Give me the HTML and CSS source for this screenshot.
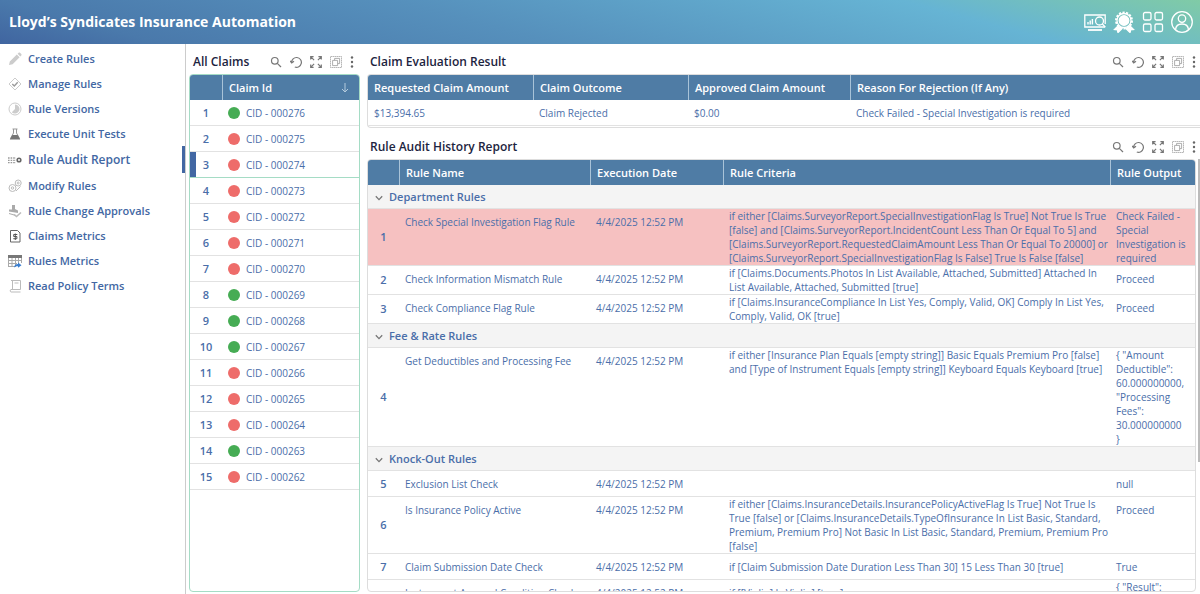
FILE: index.html
```html
<!DOCTYPE html>
<html lang="en">
<head>
  <meta charset="UTF-8" />
  <title>Lloyd's Syndicates Insurance Automation</title>
  <meta name="viewport" content="width=device-width, initial-scale=1.0">
  <link rel="stylesheet" href="styles.css">
</head>
<body>
  <!-- Shared icons -->
  <svg class="sprite" aria-hidden="true">
    <symbol id="i-search" viewBox="0 0 12 12"><circle cx="4.8" cy="4.8" r="3.3"/><path d="M7.3 7.3 11 11"/></symbol>
    <symbol id="i-reload" viewBox="0 0 12 12"><path d="M1.6 6.6A4.9 4.9 0 1 1 4.8 11M0 4.8l1.7 2.2 2.3-1.7"/></symbol>
    <symbol id="i-expand" viewBox="0 0 12 12"><path d="M.7 3.6V.7h2.9M8.4.7h2.9v2.9M11.3 8.4v2.9H8.4M3.6 11.3H.7V8.4M.7.7l3.4 3.4M11.3.7 7.9 4.1M11.3 11.3 7.9 7.9M.7 11.3l3.4-3.4"/></symbol>
    <symbol id="i-copy" viewBox="0 0 12 12"><rect x=".5" y=".5" width="11" height="11" stroke-dasharray="1.4 .6"/><path d="M4.6 4.2V2.4h5v5.2H7.8M2.6 4.4h5v5.2h-5z"/></symbol>
    <symbol id="i-more" viewBox="0 0 4 12"><circle cx="2" cy="1.5" r="1.2"/><circle cx="2" cy="6" r="1.2"/><circle cx="2" cy="10.5" r="1.2"/></symbol>
    <symbol id="i-chevron" viewBox="0 0 8 6"><path d="M.8 1.2 4 4.6l3.2-3.4"/></symbol>
  </svg>

  <header class="topbar">
    <h1>Lloyd’s Syndicates Insurance Automation</h1>
    <div class="topbar-actions">
      <button type="button" aria-label="Dashboard">
        <svg viewBox="0 0 22 22"><path d="M21.200 13V4H.8v12h20.400"/><path d="M4 13.500V11M6.200 13.500V9.500M8.400 13.500V8" stroke-width="1.400"/><circle cx="15.500" cy="10" r="4"/><path d="m18.300 13 3 3"/><path d="M4 19h14" stroke-width="1.800"/></svg>
      </button>
      <button type="button" aria-label="Awards">
        <svg viewBox="0 0 22 22"><path class="solid" d="m5 15-3.500 3.500 3 .3.500 2.700 4-4zM17 15l3.500 3.500-3 .3-.5 2.700-4-4z"/><circle cx="11" cy="9.500" r="8" stroke-dasharray="2.200 1.390" stroke-width="2"/><circle cx="11" cy="9.500" r="7"/><circle class="solid" cx="11" cy="9.500" r="4.800"/></svg>
      </button>
      <button type="button" aria-label="Apps">
        <svg viewBox="0 0 22 22"><rect x="1.500" y="1.500" width="7.500" height="7.500" rx="1.500"/><rect x="13" y="1.500" width="7.500" height="7.500" rx="1.500"/><rect x="1.500" y="13" width="7.500" height="7.500" rx="1.500"/><rect x="13" y="13" width="7.500" height="7.500" rx="1.500"/></svg>
      </button>
      <button type="button" aria-label="Profile">
        <svg viewBox="0 0 22 22"><circle cx="11" cy="11" r="10.300"/><circle cx="11" cy="7.600" r="3.700"/><path d="M4.500 18.800c.3-3.800 3-5.800 6.500-5.800s6.200 2 6.500 5.800"/></svg>
      </button>
    </div>
  </header>

  <div class="layout">
    <nav class="sidebar">
      <a href="#"><svg viewBox="0 0 14 14"><path fill="#ccc" d="m1 13 .8-3.600 7-7 2.800 2.800-7 7zM9.600 1.700l1-1c.5-.4 1-.4 1.400 0l1.300 1.300c.4.5.4 1 0 1.400l-1 1z"/></svg>Create Rules</a>
      <a href="#"><svg viewBox="0 0 14 14"><path fill="none" stroke="#ccc" d="m7 1 6 6-6 6-6-6z"/><path fill="none" stroke="#999" stroke-width="1.400" d="m4.300 7 2 2 3.400-3.700"/></svg>Manage Rules</a>
      <a href="#"><svg viewBox="0 0 14 14"><circle cx="7" cy="7" r="6" fill="none" stroke="#ccc"/><path fill="#ccc" d="M7 2.500a4.500 4.500 0 1 1-3.200 7.700L7 7z"/></svg>Rule Versions</a>
      <a href="#"><svg viewBox="0 0 14 14"><path fill="none" stroke="#999" d="M4.500 2h5M5.500 2v4l-3 5.500h9L8.500 6V2"/><path fill="#777" d="m4.300 8-2.500 4.500h10.400L9.700 8z"/></svg>Execute Unit Tests</a>
      <a href="#" class="active"><svg viewBox="0 0 14 14"><path fill="none" stroke="#999" stroke-width="1.300" stroke-dasharray="1.600 1" d="M0 5h8M0 7.300h8M0 9.600h8"/><circle cx="11" cy="7" r="1.800" fill="none" stroke="#666" stroke-width="1.600"/></svg>Rule Audit Report</a>
      <a href="#"><svg viewBox="0 0 14 14"><g fill="none" stroke="#bbb"><circle cx="4.500" cy="9" r="3.500"/><circle cx="4.500" cy="9" r="1.200"/><circle cx="10.200" cy="4" r="3"/><circle cx="10.200" cy="4" r="1"/><path d="m8 12 4.500-4.500"/></g></svg>Modify Rules</a>
      <a href="#"><svg viewBox="0 0 14 14"><path fill="#aaa" d="M4 1h3v4l3 1.500V9L1 7.500V5.500h3zM1 9l7 2v1L1 10z"/><path fill="none" stroke="#bbb" stroke-width="1.600" d="m6 10.500 2.500 2L13 8.500"/></svg>Rule Change Approvals</a>
      <a href="#"><svg viewBox="0 0 14 14"><path fill="none" stroke="#666" d="M2.500 1.500h7l2.500 2.500v9H2.500z"/><path fill="none" stroke="#555" d="M9.300 5.500H5.700v2h3.200v2.200H5.300M7.300 4.500v6.500"/></svg>Claims Metrics</a>
      <a href="#"><svg viewBox="0 0 14 14"><path fill="#777" d="M0 1h14v3H0z"/><path fill="none" stroke="#aaa" d="M.5 4v9M4 4v9M7.500 4v9M10.500 4v5M13.500 4v5M0 6.500h14M0 9.500h9M0 12.500h7"/><path fill="#3b7fd0" d="M6 13.500c.3-2.500 2-3.500 4-3.500V8.500l3.500 2.700-3.500 2.500v-1.500c-1.600 0-2.800.3-4 1.300z"/></svg>Rules Metrics</a>
      <a href="#"><svg viewBox="0 0 14 14"><path fill="none" stroke="#bbb" d="M3 1.500h9.500v9H3c-1 0-1 2.500 0 2.500h9.500M4.500 1.500v9M6.500 4h4"/></svg>Read Policy Terms</a>
    </nav>

    <section class="claims">
      <div class="panel-head">
        <h2>All Claims</h2>
        <div class="tools">
          <button type="button" aria-label="Search"><svg><use href="#i-search"/></svg></button>
          <button type="button" aria-label="Reload"><svg><use href="#i-reload"/></svg></button>
          <button type="button" aria-label="Expand"><svg><use href="#i-expand"/></svg></button>
          <button type="button" aria-label="Copy"><svg class="light"><use href="#i-copy"/></svg></button>
          <button type="button" aria-label="More"><svg class="more"><use href="#i-more"/></svg></button>
        </div>
      </div>
      <div class="grid-box mint">
        <table class="claims-table">
          <colgroup><col class="c-num"><col></colgroup>
          <thead>
            <tr><th></th><th><div class="sort">Claim Id <svg viewBox="0 0 8 10"><path d="M4 0v9M1 6l3 3 3-3"/></svg></div></th></tr>
          </thead>
          <tbody>
            <tr><td class="num">1</td><td><span class="dot green"></span>CID - 000276</td></tr>
            <tr><td class="num">2</td><td><span class="dot"></span>CID - 000275</td></tr>
            <tr class="selected"><td class="num">3</td><td><span class="dot"></span>CID - 000274</td></tr>
            <tr><td class="num">4</td><td><span class="dot"></span>CID - 000273</td></tr>
            <tr><td class="num">5</td><td><span class="dot"></span>CID - 000272</td></tr>
            <tr><td class="num">6</td><td><span class="dot"></span>CID - 000271</td></tr>
            <tr><td class="num">7</td><td><span class="dot"></span>CID - 000270</td></tr>
            <tr><td class="num">8</td><td><span class="dot green"></span>CID - 000269</td></tr>
            <tr><td class="num">9</td><td><span class="dot green"></span>CID - 000268</td></tr>
            <tr><td class="num">10</td><td><span class="dot green"></span>CID - 000267</td></tr>
            <tr><td class="num">11</td><td><span class="dot"></span>CID - 000266</td></tr>
            <tr><td class="num">12</td><td><span class="dot"></span>CID - 000265</td></tr>
            <tr><td class="num">13</td><td><span class="dot"></span>CID - 000264</td></tr>
            <tr><td class="num">14</td><td><span class="dot green"></span>CID - 000263</td></tr>
            <tr><td class="num">15</td><td><span class="dot"></span>CID - 000262</td></tr>
          </tbody>
        </table>
      </div>
    </section>

    <main class="content">
      <section class="result">
        <div class="panel-head">
          <h2>Claim Evaluation Result</h2>
          <div class="tools">
            <button type="button" aria-label="Search"><svg><use href="#i-search"/></svg></button>
            <button type="button" aria-label="Reload"><svg><use href="#i-reload"/></svg></button>
            <button type="button" aria-label="Expand"><svg><use href="#i-expand"/></svg></button>
            <button type="button" aria-label="Copy"><svg class="light"><use href="#i-copy"/></svg></button>
            <button type="button" aria-label="More"><svg class="more"><use href="#i-more"/></svg></button>
          </div>
        </div>
        <div class="grid-box open">
          <table>
            <colgroup><col class="c-requested"><col class="c-outcome"><col class="c-approved"><col></colgroup>
            <thead>
              <tr><th>Requested Claim Amount</th><th>Claim Outcome</th><th>Approved Claim Amount</th><th>Reason For Rejection (If Any)</th></tr>
            </thead>
            <tbody>
              <tr><td>$13,394.65</td><td>Claim Rejected</td><td>$0.00</td><td>Check Failed - Special Investigation is required</td></tr>
            </tbody>
          </table>
        </div>
      </section>

      <section class="audit">
        <div class="panel-head">
          <h2>Rule Audit History Report</h2>
          <div class="tools">
            <button type="button" aria-label="Search"><svg><use href="#i-search"/></svg></button>
            <button type="button" aria-label="Reload"><svg><use href="#i-reload"/></svg></button>
            <button type="button" aria-label="Expand"><svg><use href="#i-expand"/></svg></button>
            <button type="button" aria-label="Copy"><svg class="light"><use href="#i-copy"/></svg></button>
            <button type="button" aria-label="More"><svg class="more"><use href="#i-more"/></svg></button>
          </div>
        </div>
        <div class="audit-scroll">
          <div class="grid-box">
            <table class="audit-table">
              <colgroup><col class="c-num"><col class="c-name"><col class="c-date"><col><col class="c-output"></colgroup>
              <thead>
                <tr><th></th><th>Rule Name</th><th>Execution Date</th><th>Rule Criteria</th><th>Rule Output</th></tr>
              </thead>
              <tbody>
                <tr class="group"><td colspan="5"><svg><use href="#i-chevron"/></svg>Department Rules</td></tr>
                <tr class="failed"><td class="num">1</td><td>Check Special Investigation Flag Rule</td><td>4/4/2025 12:52 PM</td><td class="multi">if either [Claims.SurveyorReport.SpecialInvestigationFlag Is True] Not True Is True<br>[false] and [Claims.SurveyorReport.IncidentCount Less Than Or Equal To 5] and<br>[Claims.SurveyorReport.RequestedClaimAmount Less Than Or Equal To 20000] or<br>[Claims.SurveyorReport.SpecialInvestigationFlag Is False] True Is False [false]</td><td class="multi">Check Failed -<br>Special<br>Investigation is<br>required</td></tr>
                <tr><td class="num">2</td><td>Check Information Mismatch Rule</td><td>4/4/2025 12:52 PM</td><td class="multi">if [Claims.Documents.Photos In List Available, Attached, Submitted] Attached In<br>List Available, Attached, Submitted [true]</td><td>Proceed</td></tr>
                <tr><td class="num">3</td><td>Check Compliance Flag Rule</td><td>4/4/2025 12:52 PM</td><td class="multi">if [Claims.InsuranceCompliance In List Yes, Comply, Valid, OK] Comply In List Yes,<br>Comply, Valid, OK [true]</td><td>Proceed</td></tr>
                <tr class="group"><td colspan="5"><svg><use href="#i-chevron"/></svg>Fee &amp; Rate Rules</td></tr>
                <tr><td class="num">4</td><td>Get Deductibles and Processing Fee</td><td>4/4/2025 12:52 PM</td><td class="multi">if either [Insurance Plan Equals [empty string]] Basic Equals Premium Pro [false]<br>and [Type of Instrument Equals [empty string]] Keyboard Equals Keyboard [true]</td><td class="multi">{ "Amount<br>Deductible":<br>60.000000000,<br>"Processing<br>Fees":<br>30.000000000<br>}</td></tr>
                <tr class="group"><td colspan="5"><svg><use href="#i-chevron"/></svg>Knock-Out Rules</td></tr>
                <tr><td class="num">5</td><td>Exclusion List Check</td><td>4/4/2025 12:52 PM</td><td></td><td>null</td></tr>
                <tr><td class="num">6</td><td>Is Insurance Policy Active</td><td>4/4/2025 12:52 PM</td><td class="multi">if either [Claims.InsuranceDetails.InsurancePolicyActiveFlag Is True] Not True Is<br>True [false] or [Claims.InsuranceDetails.TypeOfInsurance In List Basic, Standard,<br>Premium, Premium Pro] Not Basic In List Basic, Standard, Premium, Premium Pro<br>[false]</td><td>Proceed</td></tr>
                <tr><td class="num">7</td><td>Claim Submission Date Check</td><td>4/4/2025 12:52 PM</td><td>if [Claim Submission Date Duration Less Than 30] 15 Less Than 30 [true]</td><td>True</td></tr>
                <tr><td class="num">8</td><td>Instrument Age and Condition Check</td><td>4/4/2025 12:52 PM</td><td>if [[Violin] Is Violin] [true]</td><td class="multi">{ "Result":<br>"Passed",<br>"Score": 1 }</td></tr>
              </tbody>
            </table>
          </div>
          <div class="scroll-thumb"></div>
        </div>
      </section>
    </main>
  </div>
</body>
</html>
```

FILE: styles.css
```css
* {
  box-sizing: border-box;
}
body {
  margin: 0;
  height: 100vh;
  display: flex;
  flex-direction: column;
  overflow: hidden;
  font-family: "Open Sans", sans-serif;
  font-size: 10px;
  line-height: 14px;
  color: #4a6ea9;
  background: #fff;
}
button {
  padding: 0;
  border: none;
  background: none;
  cursor: pointer;
}
svg {
  display: block;
  flex: none;
}
.sprite {
  width: 0;
  height: 0;
  position: absolute;
}

/* Top bar */
.topbar {
  flex: none;
  height: 44px;
  padding: 0 7px 0 9px;
  display: flex;
  align-items: center;
  justify-content: space-between;
  background: linear-gradient(15deg, #4065a0 0%, #4a79ab 12%, #5690bc 41%, #66b4d4 78%, #80cba6 100%);
}
.topbar h1 {
  margin: 0;
  font-size: 14px;
  font-weight: 700;
  color: #fff;
}
.topbar-actions {
  display: flex;
  gap: 7px;
}
.topbar-actions svg {
  width: 22px;
  height: 22px;
  fill: none;
  stroke: #fff;
  stroke-width: 1.3;
}
.topbar-actions .solid {
  fill: #fff;
}

.layout {
  flex: 1;
  min-height: 0;
  display: flex;
}

/* Sidebar */
.sidebar {
  flex: none;
  width: 186px;
  padding-top: 2px;
  border-right: 1px solid #ccc;
}
.sidebar a {
  height: 25px;
  padding-left: 8px;
  display: flex;
  align-items: center;
  gap: 6px;
  font-size: 11px;
  font-weight: 600;
  color: #4267a3;
  text-decoration: none;
}
.sidebar a.active {
  height: 27px;
  font-size: 12px;
  border-right: 3px solid #4267a3;
}
.sidebar svg {
  width: 14px;
  height: 14px;
}

/* Panels */
.claims {
  flex: none;
  width: 174px;
  padding: 0 0 2px 3px;
  display: flex;
  flex-direction: column;
}
.panel-head {
  flex: none;
  height: 30px;
  padding: 5px 4px 0 3px;
  display: flex;
  align-items: center;
  justify-content: space-between;
}
.claims .panel-head {
  padding-left: 4px;
  padding-right: 6px;
}
.panel-head h2 {
  margin: 0;
  font-size: 12px;
  font-weight: 600;
  color: #1c2440;
}
.tools {
  display: flex;
  gap: 8px;
}
.tools svg {
  width: 12px;
  height: 12px;
  fill: none;
  stroke: #777;
  stroke-width: 1.2;
}
.tools .light {
  stroke: #999;
  stroke-width: 0.8;
}
.tools .more {
  width: 4px;
  fill: #666;
  stroke: none;
}
.content {
  flex: 1;
  min-width: 0;
  padding: 0 0 2px 7px;
  display: flex;
  flex-direction: column;
}
.result {
  flex: none;
  padding-bottom: 1px;
}
.audit {
  flex: 1;
  min-height: 0;
  display: flex;
  flex-direction: column;
}
.audit-scroll {
  flex: 1;
  min-height: 0;
  display: flex;
  gap: 2px;
}
.scroll-thumb {
  width: 2px;
  height: 70%;
  background: #bbb;
}

/* Tables */
.grid-box {
  flex: 1;
  min-width: 0;
  min-height: 0;
  border: 1px solid #ddd;
  border-radius: 4px;
  overflow: hidden;
}
.grid-box.mint {
  border-color: #a5dcc5;
}
.grid-box.open {
  padding-bottom: 1px;
  border-right: none;
  border-radius: 4px 0 0 4px;
}
table {
  width: 100%;
  table-layout: fixed;
  border-collapse: separate;
  border-spacing: 0;
}
th {
  height: 25px;
  padding: 0 6px;
  border-left: 1px solid #a9c3d8;
  background: #4f7ca5;
  color: #fff;
  font-size: 11px;
  font-weight: 600;
  text-align: left;
  white-space: nowrap;
}
th:first-child {
  border-left: none;
}
td {
  padding: 6px 6px 5px;
  border-bottom: 1px solid #e2e2e2;
  vertical-align: top;
  white-space: nowrap;
}
td.multi {
  padding-top: 0;
  padding-bottom: 0;
}
td.num {
  padding: 0;
  font-size: 11px;
  font-weight: 600;
  text-align: center;
  vertical-align: middle;
}
.c-num {
  width: 31px;
}
.claims-table .c-num {
  width: 32px;
}
.c-requested {
  width: 165px;
}
.c-outcome {
  width: 155px;
}
.c-approved {
  width: 162px;
}
.c-name {
  width: 191px;
}
.c-date {
  width: 133px;
}
.c-output {
  width: 85px;
}
.sort {
  display: flex;
  align-items: center;
  justify-content: space-between;
  padding-right: 4px;
}
.sort svg {
  width: 8px;
  height: 10px;
  fill: none;
  stroke: #b5cbdd;
}
.claims-table .dot {
  display: inline-block;
  width: 12px;
  height: 12px;
  margin-right: 6px;
  border-radius: 50%;
  background: #ee6c6a;
  vertical-align: top;
  margin-top: 1px;
}
.claims-table .dot.green {
  background: #46ac54;
}
.selected td {
  border-bottom-color: #a5dcc5;
}
.selected .num {
  box-shadow: inset 6px 0 #4267a3;
}
.group td {
  padding: 5px 7px 4px;
  background: #f4f4f4;
  font-size: 11px;
  font-weight: 600;
}
.group svg {
  display: inline-block;
  width: 8px;
  height: 6px;
  margin-right: 6px;
  fill: none;
  stroke: #777;
  stroke-width: 1.3;
}
.failed td {
  background: #f6c1c1;
}
```
